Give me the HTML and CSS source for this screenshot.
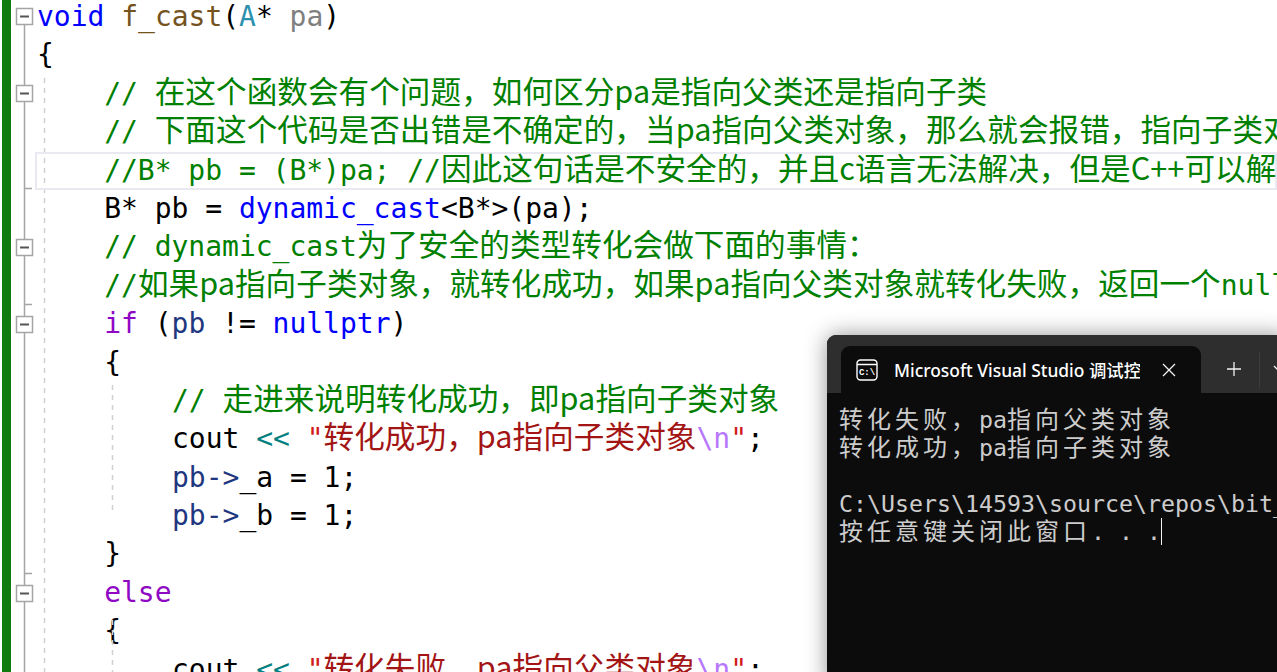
FILE: index.html
```html
<!DOCTYPE html>
<html lang="zh">
<head>
<meta charset="utf-8">
<title>f_cast</title>
<link rel="stylesheet" href="styles.css">
</head>
<body>
<main class="editor">
  <div class="change-bar"></div>
  <svg class="gutter" width="21" height="672" viewBox="0 0 21 672" aria-hidden="true">
    <path class="fold-line" d="M10.5 24V672M10.5 188.5H18M10.5 304.5H18M10.5 573.5H18"/>
    <g class="fold-box"><rect x="2.5" y="8.5" width="16" height="16"/><path d="M6 16.5H15"/></g>
    <g class="fold-box"><rect x="2.5" y="85.5" width="16" height="16"/><path d="M6 93.5H15"/></g>
    <g class="fold-box"><rect x="2.5" y="239.5" width="16" height="16"/><path d="M6 247.5H15"/></g>
    <g class="fold-box"><rect x="2.5" y="316.5" width="16" height="16"/><path d="M6 324.5H15"/></g>
    <g class="fold-box"><rect x="2.5" y="585.5" width="16" height="16"/><path d="M6 593.5H15"/></g>
  </svg>
  <div class="code">
    <svg class="guides" width="100" height="672" viewBox="0 0 100 672" aria-hidden="true">
      <path d="M9.5 78V672M77.5 385V512M77.5 620V672"/>
    </svg>
    <div class="line"><span class="k">void</span> <span class="f">f_cast</span>(<span class="t">A</span>* <span class="p">pa</span>)</div>
    <div class="line">{</div>
    <div class="line i1 c">// <span class="z">在这个函数会有个问题，如何区分pa是指向父类还是指向子类</span></div>
    <div class="line i1 c">// <span class="z">下面这个代码是否出错是不确定的，当pa指向父类对象，那么就会报错，指向子类对</span></div>
    <div class="line i1 c current">//B* pb = (B*)pa; //<span class="z">因此这句话是不安全的，并且c语言无法解决，但是C++可以解</span></div>
    <div class="line i1">B* pb = <span class="k">dynamic_cast</span>&lt;B*&gt;(pa);</div>
    <div class="line i1 c">// dynamic_cast<span class="z">为了安全的类型转化会做下面的事情：</span></div>
    <div class="line i1 c">//<span class="z">如果pa指向子类对象，就转化成功，如果pa指向父类对象就转化失败，返回一个</span>null</div>
    <div class="line i1"><span class="w">if</span> (<span class="v">pb</span> != <span class="k">nullptr</span>)</div>
    <div class="line i1">{</div>
    <div class="line i2 c">// <span class="z">走进来说明转化成功，即pa指向子类对象</span></div>
    <div class="line i2">cout <span class="o">&lt;&lt;</span> <span class="q">"</span><span class="z s">转化成功，pa指向子类对象</span><span class="e">\n</span><span class="q">"</span>;</div>
    <div class="line i2"><span class="v">pb</span><span class="g">-&gt;</span>_a = 1;</div>
    <div class="line i2"><span class="v">pb</span><span class="g">-&gt;</span>_b = 1;</div>
    <div class="line i1">}</div>
    <div class="line i1"><span class="w">else</span></div>
    <div class="line i1">{</div>
    <div class="line i2">cout <span class="o">&lt;&lt;</span> <span class="q">"</span><span class="z s">转化失败，pa指向父类对象</span><span class="e">\n</span><span class="q">"</span>;</div>
  </div>
</main>

<section class="terminal">
  <header class="term-bar">
    <div class="tab">
      <svg class="tab-icon" width="22" height="22" viewBox="0 0 22 22" aria-hidden="true">
        <rect x="1" y="1" width="20" height="20" rx="3.5"/>
        <path d="M1 5.5H21"/>
        <text x="11" y="16" text-anchor="middle">C:\</text>
      </svg>
      <span class="tab-title">Microsoft Visual Studio 调试控</span>
      <svg class="tab-close" width="14" height="14" viewBox="0 0 14 14" aria-hidden="true"><path d="M1 1L13 13M13 1L1 13"/></svg>
    </div>
    <svg class="plus" width="14" height="14" viewBox="0 0 14 14" aria-hidden="true"><path d="M7 0V14M0 7H14"/></svg>
    <span class="sep"></span>
    <svg class="chev" width="12" height="8" viewBox="0 0 12 8" aria-hidden="true"><path d="M1 1L6 6L11 1"/></svg>
  </header>
  <div class="term-body">
    <div class="term-line"><span class="y">转化失败，</span>pa<span class="y">指向父类对象</span></div>
    <div class="term-line"><span class="y">转化成功，</span>pa<span class="y">指向子类对象</span></div>
    <div class="term-line"></div>
    <div class="term-line">C:\Users\14593\source\repos\bit_</div>
    <div class="term-line"><span class="y">按任意键关闭此窗口</span>. . .<span class="cursor"></span></div>
  </div>
</section>
</body>
</html>
```
FILE: styles.css
```css
html, body {
  margin: 0;
  height: 672px;
  overflow: hidden;
  background: #fff;
}
.editor {
  display: flex;
  height: 672px;
  padding-left: 2px;
  box-sizing: border-box;
}
.change-bar {
  width: 9px;
  flex: none;
  background: #107c10;
}
.gutter {
  flex: none;
  margin-left: 3px;
  width: 21px;
}
.fold-line { fill: none; stroke: #a5a5a5; stroke-width: 1.5; }
.fold-box rect { fill: #fff; stroke: #a5a5a5; stroke-width: 1.5; }
.fold-box path { stroke: #555; stroke-width: 2; }
.code {
  flex: 1;
  min-width: 0;
  position: relative;
  margin-top: -2px;
  font: 28px/38.4px "DejaVu Sans Mono", monospace;
  letter-spacing: -0.02px;
  color: #000;
}
.guides {
  position: absolute;
  left: 0;
  top: 2px;
  pointer-events: none;
}
.guides path { fill: none; stroke: #d0d0d0; stroke-width: 1.5; stroke-dasharray: 5 5; }
.line {
  height: 38.4px;
  padding-left: 2px;
  white-space: pre;
  overflow: hidden;
  box-sizing: border-box;
}
.i1 { padding-left: 69.2px; }
.i2 { padding-left: 137px; }
.current {
  box-shadow: inset 0 0 0 2px #e9e9f2;
  position: relative;
}
.z {
  font-family: "Noto Sans CJK SC", sans-serif;
  font-size: 30.6px;
  line-height: 0;
  letter-spacing: 0.05px;
}
.c { color: #008000; }
.k { color: #0000ff; }
.f { color: #74531f; }
.t { color: #2b91af; }
.p { color: #808080; }
.v { color: #1f377f; }
.w { color: #8f08c4; }
.o { color: #008080; }
.g { color: #1f377f; }
.s { color: #a31515; }
.q { color: #d11a1a; }
.e { color: #b776fb; }

.terminal {
  position: absolute;
  left: 827px;
  top: 335px;
  width: 460px;
  height: 350px;
  background: #0c0c0c;
  border-radius: 9px 0 0 0;
  box-shadow: 0 0 22px rgba(0, 0, 0, .42);
  overflow: hidden;
}
.term-bar {
  height: 58px;
  background: #2e2e2e;
  display: flex;
  align-items: flex-end;
  padding-left: 14px;
  box-sizing: border-box;
}
.tab {
  width: 360px;
  height: 47px;
  flex: none;
  display: flex;
  align-items: center;
  background: #0c0c0c;
  border-radius: 9px 9px 0 0;
  box-sizing: border-box;
  padding-left: 15px;
}
.tab-icon { flex: none; }
.tab-icon rect, .tab-icon path { fill: none; stroke: #fff; stroke-width: 1.4; }
.tab-icon text { font: bold 9px "Liberation Mono", monospace; fill: #fff; }
.tab-title {
  margin-left: 16px;
  width: 246px;
  overflow: hidden;
  white-space: nowrap;
  font: 500 17.4px/24px "Noto Sans", "Noto Sans CJK SC", sans-serif;
  color: #fff;
  flex: none;
}
.tab-close { margin-left: 22px; flex: none; }
.tab-close path, .plus path { fill: none; stroke: #f2f2f2; stroke-width: 1.3; }
.plus { margin: 0 0 17px 26px; flex: none; }
.sep {
  width: 1px;
  height: 36px;
  background: #3d3d3d;
  margin: 0 0 5px 18px;
  flex: none;
}
.chev { margin: 0 0 20px 13px; flex: none; }
.chev path { fill: none; stroke: #f2f2f2; stroke-width: 1.3; }
.term-body {
  padding: 13px 0 0 12px;
  font: 23.25px/28px "DejaVu Sans Mono", monospace;
  color: #cccccc;
}
.term-line { height: 28px; white-space: pre; }
.y {
  font-family: "Noto Sans CJK SC", sans-serif;
  font-size: 24px;
  letter-spacing: 4px;
  line-height: 0;
}
.cursor {
  display: inline-block;
  width: 1px;
  height: 27px;
  background: #f2f2f2;
  vertical-align: -5px;
  margin-left: 0;
}
```
